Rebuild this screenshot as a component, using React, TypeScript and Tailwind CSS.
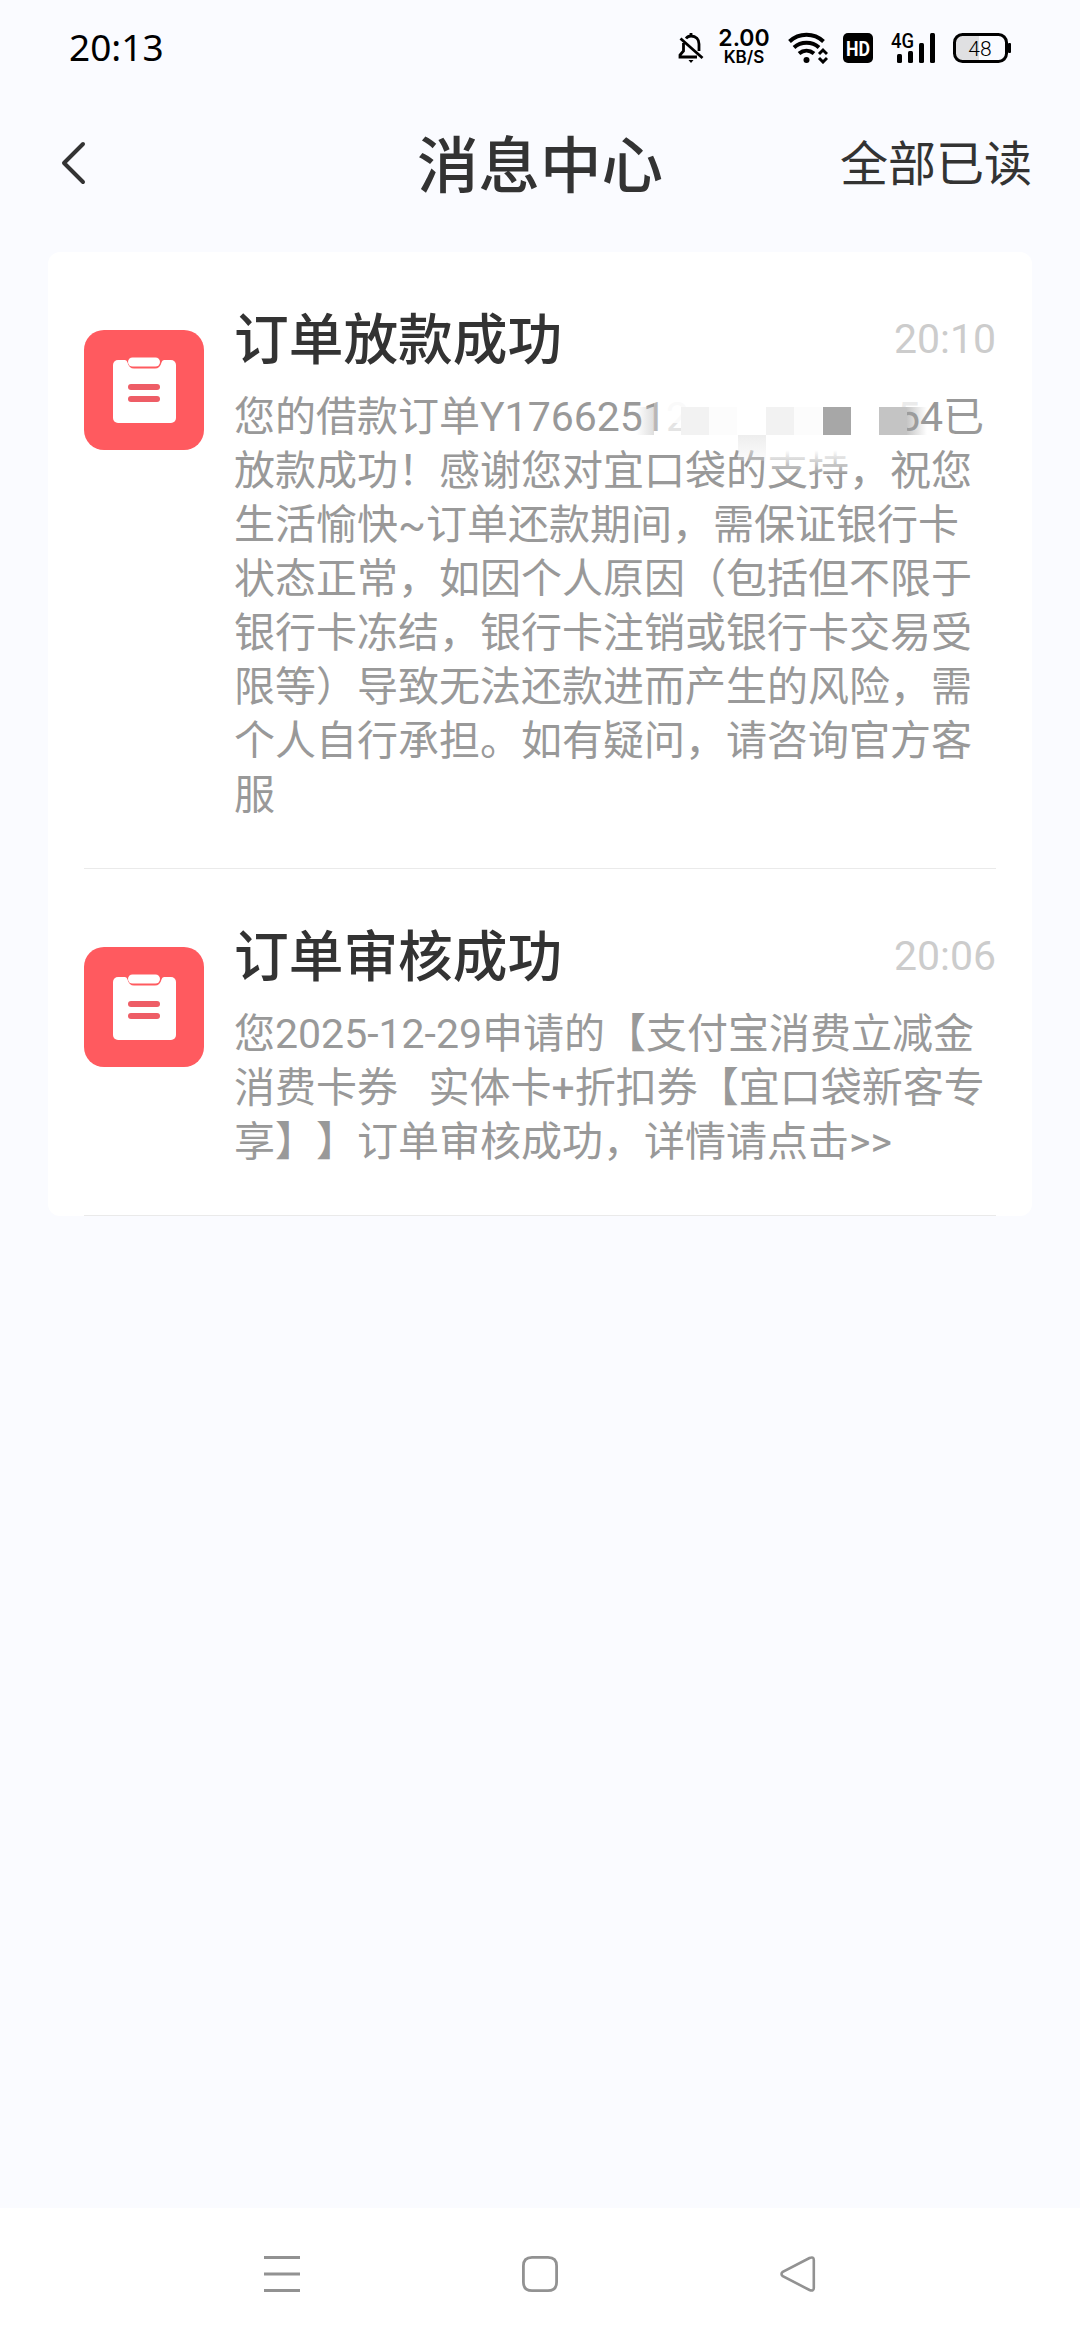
import React from 'react';

interface Message {
  id: string;
  title: string;
  time: string;
  lines: React.ReactNode[];
}

// Order number with its middle digits covered by mosaic blocks
const MaskedOrderNo: React.FC = () => (
  <span className="relative">
    Y1766251<span className="text-[#e4e4e4]">2</span>
    <span className="inline-block w-[208px]" />54
    <span className="absolute left-[156px] top-[14px] h-[28px] w-[18px] bg-linear-to-l from-[#bdbdbd]/50 to-white/0" />
    <span className="absolute left-[174px] top-[6px] h-[32px] w-[8px] bg-white/30" />
    <span className="absolute left-[184px] top-0 h-[30px] w-[26px] bg-white/80" />
    <span className="absolute left-[201px] top-[14px] h-[28px] w-[28px] bg-[#f2f2f2]" />
    <span className="absolute left-[229px] top-[14px] h-[28px] w-[28px] bg-[#fcfcfc]" />
    <span className="absolute left-[286px] top-[14px] h-[28px] w-[28px] bg-[#f2f2f2]" />
    <span className="absolute left-[314px] top-[14px] h-[28px] w-[28px] bg-[#fcfcfc]" />
    <span className="absolute left-[343px] top-[14px] h-[28px] w-[28px] bg-[#a7a7a7]" />
    <span className="absolute left-[412px] top-0 h-[14px] w-[28px] bg-white/80" />
    <span className="absolute left-[399px] top-[14px] h-[28px] w-[28px] bg-[#c4c4c4]" />
    <span className="absolute left-[427px] top-[14px] h-[28px] w-[20px] bg-linear-to-r from-[#a0a0a0]/60 to-white/0" />
    <span className="absolute left-[258px] top-[42px] z-10 h-[26px] w-[28px] bg-linear-to-b from-[#eeeeee] to-[#eeeeee]/20" />
    <span className="absolute left-[286px] top-[42px] z-10 h-[38px] w-[88px] bg-linear-to-b from-white from-40% to-white/10" />
  </span>
);

const MESSAGES: Message[] = [
  {
    id: 'loan',
    title: '订单放款成功',
    time: '20:10',
    lines: [
      <>您的借款订单<MaskedOrderNo />已</>,
      '放款成功！感谢您对宜口袋的支持，祝您',
      '生活愉快~订单还款期间，需保证银行卡',
      '状态正常，如因个人原因（包括但不限于',
      '银行卡冻结，银行卡注销或银行卡交易受',
      '限等）导致无法还款进而产生的风险，需',
      '个人自行承担。如有疑问，请咨询官方客',
      '服',
    ],
  },
  {
    id: 'review',
    title: '订单审核成功',
    time: '20:06',
    lines: [
      '您2025-12-29申请的【支付宝消费立减金',
      '消费卡券   实体卡+折扣券【宜口袋新客专',
      '享】】订单审核成功，详情请点击>>',
    ],
  },
];

const StatusBar: React.FC = () => (
  <div className="flex h-24 items-center justify-between pl-[69px] pr-[68px] text-black">
    <span className="pb-[3px] font-['Noto_Sans',sans-serif] text-[37px] leading-none">20:13</span>
    <div className="flex items-center">
      <svg width="26" height="32" viewBox="0 0 26 32" fill="none" stroke="currentColor" strokeWidth="2.8">
        <path d="M8 6.500C9.500 4.500 11 4 13 4c5 0 8 3.500 8 8v7" />
        <path d="M5.500 11v8L2 23v2h17" />
        <path d="M2.500 6.500 24.500 26" />
        <path d="M13 1v3" />
        <path d="M10.500 28h5l-2.500 3z" fill="currentColor" stroke="none" />
      </svg>
      <div className="ml-[13px] flex w-[54px] flex-col items-center font-['Inter',sans-serif] font-semibold">
        <span className="text-[23px] leading-[18px]">2.00</span>
        <span className="text-[17px] leading-[20px]">KB/S</span>
      </div>
      <svg className="ml-[17px]" width="40" height="32" viewBox="0 0 40 32" fill="none" stroke="currentColor" strokeWidth="4">
        <path d="M1.500 9.500C11 .5 26 .5 35.500 9.500" />
        <path d="M6 15.500c7-6.300 18-6.300 25 0" />
        <path d="M11 21.500c4.500-3.700 10.500-3.700 15 0" />
        <circle cx="18.500" cy="28" r="3" fill="currentColor" stroke="none" />
        <path d="m31 22 4-4 4 4M31 26l4 4 4-4" strokeWidth="3" />
      </svg>
      <svg className="ml-[15px]" width="30" height="30" viewBox="0 0 30 30">
        <rect width="30" height="30" rx="5" fill="currentColor" />
        <text x="15" y="22.500" textAnchor="middle" textLength="24" lengthAdjust="spacingAndGlyphs" fill="white" className="font-['Roboto',sans-serif] text-[21px] font-bold">HD</text>
      </svg>
      <svg className="ml-[18px]" width="46" height="42" viewBox="0 -6 46 42" fill="currentColor">
        <text x="0" y="14.500" textLength="23" lengthAdjust="spacingAndGlyphs" className="font-['Roboto',sans-serif] text-[20px] font-medium">4G</text>
        <rect x="6" y="21" width="5" height="9" rx="1.500" />
        <rect x="17" y="18" width="5" height="12" rx="1.500" />
        <rect x="28" y="10" width="5" height="20" rx="1.500" />
        <rect x="39" y="0" width="5" height="30" rx="1.500" />
      </svg>
      <svg className="ml-4" width="59" height="30" viewBox="0 0 59 30">
        <path d="M9 2h17v26H9q-7 0-7-7V9q0-7 7-7z" fill="#e0e0e2" />
        <rect x="1.500" y="1.500" width="52" height="27" rx="8" fill="none" stroke="currentColor" strokeWidth="3" />
        <rect x="55" y="10" width="3" height="10" rx="1" fill="currentColor" />
        <text x="27" y="22.500" textAnchor="middle" className="font-['Roboto',sans-serif] text-[21px] font-light">48</text>
      </svg>
    </div>
  </div>
);

const Header: React.FC = () => (
  <header className="grid h-[156px] grid-cols-3 items-start px-12 pt-[23px] text-[#333333]">
    <svg className="ml-[12px] mt-[22px]" width="26" height="44" viewBox="0 0 26 44" fill="none" stroke="currentColor" strokeWidth="4" strokeLinecap="round" strokeLinejoin="round">
      <path d="M23 3 4 22l19 19" />
    </svg>
    <h1 className="whitespace-nowrap pt-[3px] text-center text-[61.500px] font-medium leading-[90px]">消息中心</h1>
    <button className="whitespace-nowrap pt-px text-right text-[48px] leading-[90px]">全部已读</button>
  </header>
);

const OrderIcon: React.FC = () => (
  <svg className="mt-[78px] shrink-0" width="120" height="120" viewBox="0 0 120 120">
    <rect width="120" height="120" rx="20" fill="#ff5a5f" />
    <rect x="29" y="30" width="63" height="63" rx="5" fill="white" />
    <path d="M41 28h39v2q-2 0-2.500 2.500Q76 38.500 71 38.500H50Q45 38.500 43.500 32.500 43 30 41 30z" fill="#ff5a5f" />
    <rect x="44" y="27.500" width="32" height="9" rx="4.500" fill="white" />
    <rect x="44" y="54" width="32" height="6" rx="3" fill="#ee5d66" />
    <rect x="44" y="66" width="32" height="6" rx="3" fill="#ee5d66" />
  </svg>
);

const MessageItem: React.FC<{ message: Message }> = ({ message }) => (
  <div className="flex border-b border-[#eaeaea] pb-[46px]">
    <OrderIcon />
    <div className="ml-[30px] flex-1 pt-[44px]">
      <div className="mb-[6px] flex h-[88px] items-center justify-between">
        <h2 className="text-[54.700px] font-medium leading-[80px] text-[#333333]">{message.title}</h2>
        <span className="pb-[2px] text-[41px] leading-[60px] text-[#cccccc]">{message.time}</span>
      </div>
      <div className="text-[41px] leading-[54px] text-[#999999]">
        {message.lines.map((line, idx) => (
          <p key={idx} className="h-[54px] whitespace-pre">{line}</p>
        ))}
      </div>
    </div>
  </div>
);

const NavBar: React.FC = () => (
  <nav className="flex h-[132px] items-center justify-around bg-white px-[153px] text-[#929292]">
    <svg width="36" height="36" viewBox="0 0 36 36" stroke="currentColor" strokeWidth="3">
      <path d="M0 1.500h36M0 18h36M0 34.500h36" />
    </svg>
    <svg width="36" height="36" viewBox="0 0 36 36" fill="none" stroke="currentColor" strokeWidth="2.800">
      <path d="M10 1.400h16q8.600 0 8.600 8.600v16q0 8.600-8.600 8.600H10q-8.600 0-8.600-8.600V10q0-8.600 8.600-8.600z" />
    </svg>
    <svg width="36" height="36" viewBox="0 0 36 36" fill="none" stroke="currentColor" strokeWidth="2.600">
      <path d="M29.500 2Q33.800.2 33.800 4v28q0 3.800-4.300 2L2.800 20.200q-2.600-2.200 0-4.400z" />
    </svg>
  </nav>
);

const App: React.FC = () => (
  <div className="flex h-[2340px] w-[1080px] flex-col overflow-hidden bg-[#fafbff] font-['Roboto','Noto_Sans_CJK_SC',sans-serif] [text-spacing-trim:space-all]">
    <StatusBar />
    <Header />
    <main className="mx-12 flex-1">
      <div className="rounded-xl bg-white px-9">
        {MESSAGES.map(message => (
          <MessageItem key={message.id} message={message} />
        ))}
      </div>
    </main>
    <NavBar />
  </div>
);

export default App;
